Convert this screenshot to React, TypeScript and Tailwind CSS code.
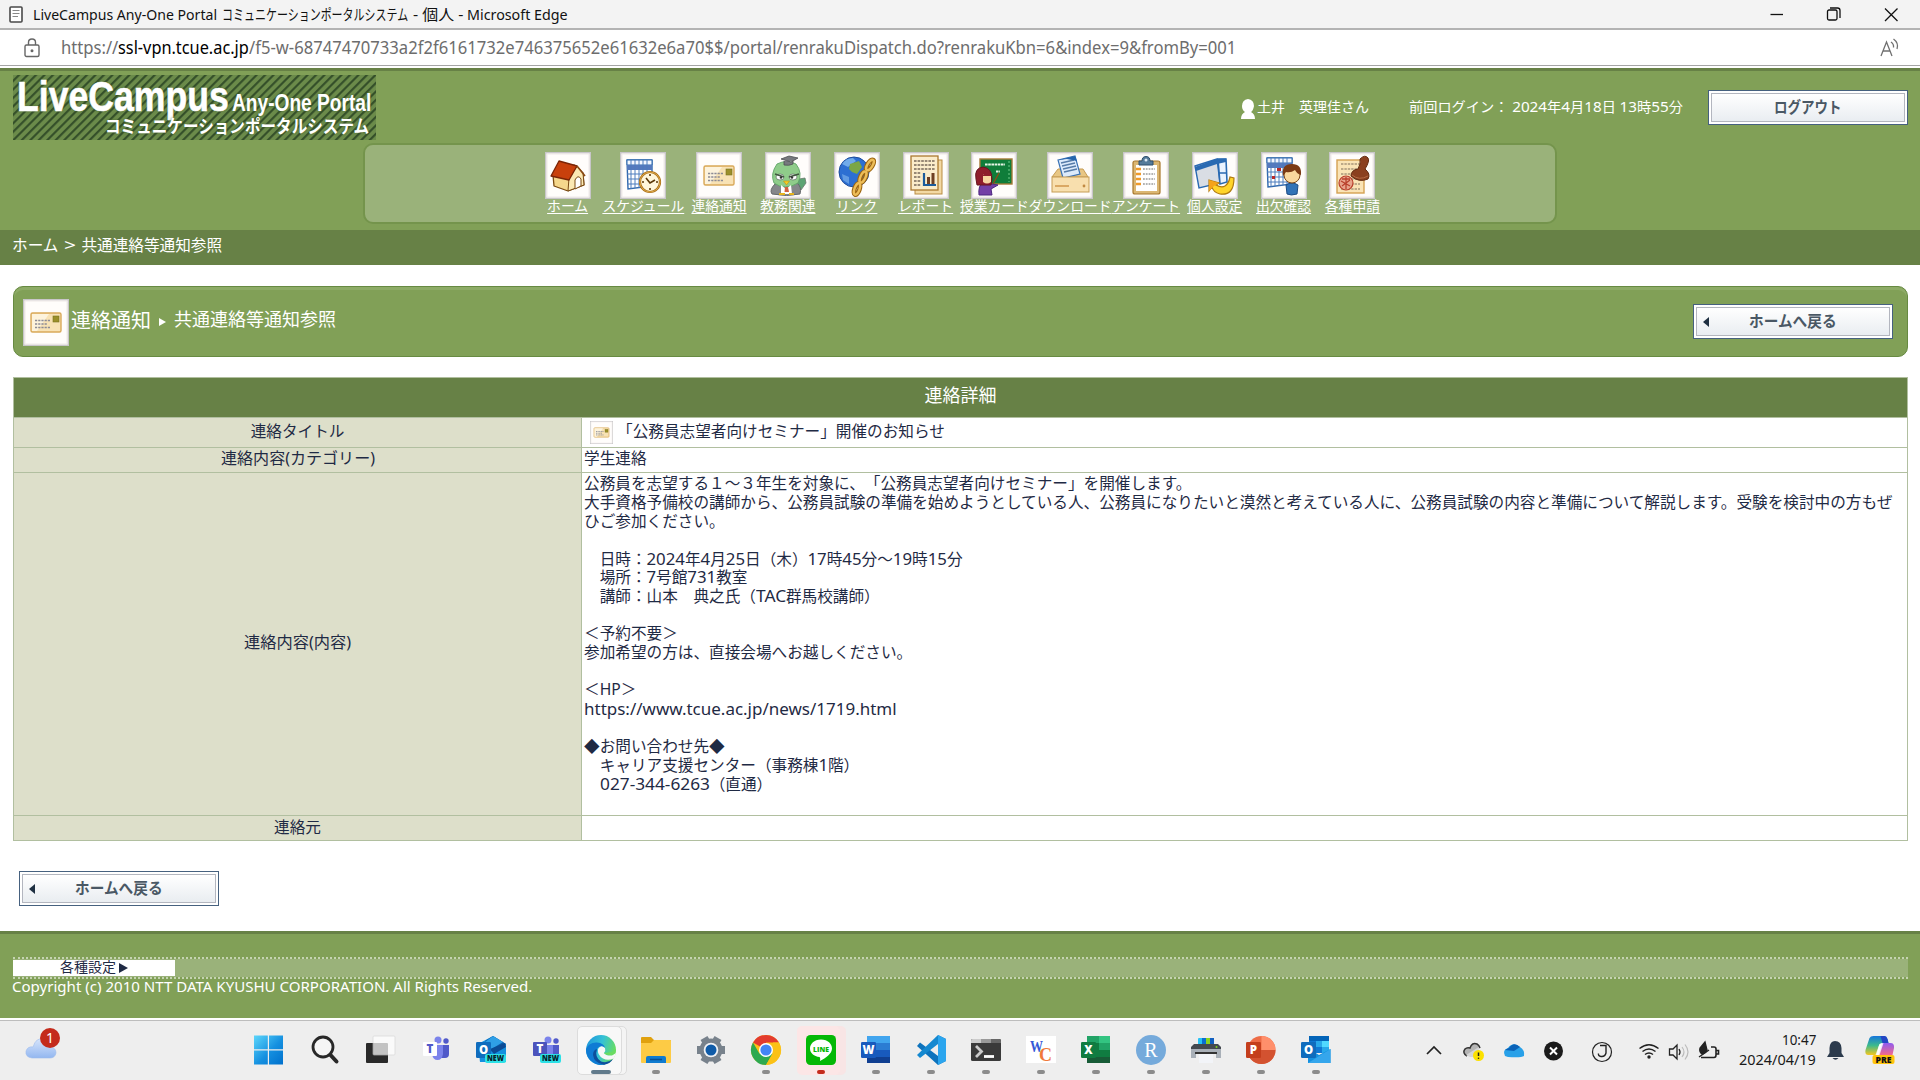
import React, { useLayoutEffect, useRef, useState } from "react";

/** Condenses or widens a single line of text to a given width. */
function Fit({ w, className = "", children }: { w: number; className?: string; children: React.ReactNode }) {
  const ref = useRef<HTMLSpanElement>(null);
  const [k, setK] = useState(1);
  useLayoutEffect(() => {
    if (ref.current && ref.current.offsetWidth) setK(w / ref.current.offsetWidth);
  }, [w]);
  return (
    <span className={"inline-block shrink-0 whitespace-pre " + className} style={{ width: w }}>
      <span ref={ref} className="inline-block origin-left whitespace-pre" style={{ transform: `scaleX(${k})` }}>
        {children}
      </span>
    </span>
  );
}

const D = ({ children }: { children: React.ReactNode }) => <span className="text-[1.075em] leading-none">{children}</span>;

/* ---------- portal icons (46 x 47) ---------- */

const HomeIcon = () => (
  <g strokeLinejoin="round">
    <path d="M8 23 L9 34 L23 39 L39 33 L38 21 L29 13 Z" fill="#f5d78c" stroke="#7a4a12" strokeWidth="1.3" />
    <path d="M24 26 L23 39 L39 33 L38 21 L32 14 Z" fill="#fbe9b4" stroke="#7a4a12" strokeWidth="1" />
    <path d="M6 24 L14 9 L32 14 L24 28 Z" fill="#c8400c" stroke="#7a2406" strokeWidth="1.3" />
    <path d="M32 14 L40 24" stroke="#8a4a12" strokeWidth="1.6" />
    <path d="M30 37 V28 Q33 22 36 27 V34 Z" fill="#fff" stroke="#7a4a12" strokeWidth="1" />
  </g>
);
const Grid = ({ x = 7, y = 8 }: { x?: number; y?: number }) => (
  <g transform={`translate(${x} ${y})`}>
    <path d="M0 0 H25 V26 L1 29 Z" fill="#fff" stroke="#2f68ad" strokeWidth="1.4" />
    <path d="M0 0 H25 V5 H0Z" fill="#f3f7ff" stroke="#2f68ad" strokeWidth="1" />
    <path d="M0 5 H25 V10 H0Z" fill="#5579bd" />
    <path d="M4 0 V29 M8 0 V28 M12 0 V28 M16 0 V27 M20 0 V27 M0 14 H25 M0 19 H25 M0 24 H25" stroke="#4c7dbd" strokeWidth="1" />
  </g>
);
const ScheduleIcon = () => (
  <g>
    <Grid />
    <circle cx="30" cy="30" r="10" fill="#fff6dc" stroke="#a86b12" strokeWidth="2.2" />
    <circle cx="30" cy="30" r="10" fill="none" stroke="#f0c060" strokeWidth="0.7" />
    <path d="M26 26 L30 31 L35 28 M30 22 V24 M30 36 V38 M22 30 H24 M36 30 H38" stroke="#5b3708" strokeWidth="1.6" fill="none" />
  </g>
);
const NoticeIcon = () => (
  <g>
    <rect x="8" y="14" width="30" height="19" rx="1.5" fill="#f8e2b4" stroke="#d9a95a" strokeWidth="1.4" />
    <path d="M9 15 H26 L14 32 H9Z" fill="#fdf3dc" />
    <path d="M12 21.5 H27 M12 25 H24 M12 28.5 H27" stroke="#8c8b95" strokeWidth="1.7" strokeDasharray="2.2 1" />
    <rect x="30" y="17" width="6" height="6" fill="#9a8f2a" stroke="#7b741f" strokeWidth="0.6" />
  </g>
);
const OwlIcon = () => (
  <g>
    <path d="M34 27 L40 26 L41 31 L36 38 L32 34Z" fill="#5da473" stroke="#6b7a6e" strokeWidth="0.8" />
    <path d="M10 32 Q4 38 7 42 Q22 45 35 42 Q37 35 32 31Z" fill="#85878a" stroke="#66696b" />
    <path d="M12 12 Q5 22 9 31 Q20 39 33 31 Q38 21 31 12 Q22 7 12 12Z" fill="#8fcc8a" stroke="#5fa566" strokeWidth="0.9" />
    <path d="M16 7 L24 4 L33 6 L26 10 Z M19 9 V13 Q24 14 28 12 V9" fill="#77797e" stroke="#4c4e52" strokeWidth="0.8" />
    <ellipse cx="15" cy="25" rx="4" ry="3" fill="#fff" stroke="#6a7a6c" strokeWidth="0.8" />
    <ellipse cx="28" cy="25" rx="4" ry="3" fill="#fff" stroke="#6a7a6c" strokeWidth="0.8" />
    <path d="M10 22 L19 25 M34 22 L24 25" stroke="#40583f" strokeWidth="1.4" />
    <circle cx="16" cy="25.5" r="1.2" fill="#333" />
    <circle cx="27" cy="25.5" r="1.2" fill="#333" />
    <path d="M16 33 L21 37 L26 33 L27 42 H16Z" fill="#fff" />
    <path d="M18.500 29 L24.500 29 L21.500 33Z" fill="#f4cd20" stroke="#c0901a" strokeWidth="0.6" />
    <path d="M20 35 H23 L24 40 H19.500Z" fill="#d0603f" />
    <path d="M14 42 H20 M24 42 H29" stroke="#e6b31e" strokeWidth="2" />
  </g>
);
const LinkIcon = () => (
  <g>
    <circle cx="20" cy="20" r="15" fill="#2d6fd2" stroke="#1f4c9b" />
    <path d="M8 12 Q12 6 19 6 L22 9 L14 15Z" fill="#8ec4f4" opacity=".7" />
    <path d="M16 12 L25 9 L28 15 L23 22 L18 20 L15 17Z" fill="#7ba646" />
    <path d="M8 22 L15 25 L15 32 L9 28Z" fill="#86b9ee" opacity=".6" />
    <g fill="none" stroke="#9c6410" strokeWidth="4.6">
      <ellipse cx="36" cy="13" rx="2.500" ry="6" transform="rotate(32 36 13)" />
      <ellipse cx="29" cy="25" rx="2.500" ry="6" transform="rotate(25 29 25)" />
      <ellipse cx="23" cy="37" rx="2.500" ry="6" transform="rotate(20 23 37)" />
    </g>
    <g fill="none" stroke="#edbd58" strokeWidth="2.400">
      <ellipse cx="36" cy="13" rx="2.500" ry="6" transform="rotate(32 36 13)" />
      <ellipse cx="29" cy="25" rx="2.500" ry="6" transform="rotate(25 29 25)" />
      <ellipse cx="23" cy="37" rx="2.500" ry="6" transform="rotate(20 23 37)" />
    </g>
  </g>
);
const ReportIcon = () => (
  <g>
    <rect x="12" y="8" width="27" height="34" fill="#f3d9a4" stroke="#b98b42" />
    <rect x="8" y="4" width="27" height="34" fill="#fbecca" stroke="#a9782f" strokeWidth="1.3" />
    <path d="M11 9 H32 M11 13 H32 M11 17 H32 M11 21 H18 M11 25 H18 M11 29 H18 M11 33 H18" stroke="#77675a" strokeWidth="1.700" strokeDasharray="2.6 1" />
    <path d="M21 21 V33 H33" stroke="#1c5c9c" strokeWidth="2.200" fill="none" />
    <path d="M25.500 32 V25 M30 32 V21" stroke="#6e3f22" strokeWidth="3" />
  </g>
);
const ClassIcon = () => (
  <g>
    <rect x="9" y="7" width="32" height="25" fill="#0f7d3a" stroke="#a67a38" strokeWidth="1.4" />
    <path d="M14 12.500 H34 M25 19.500 H29" stroke="#e6f5e6" strokeWidth="2.200" strokeDasharray="2.600 .6" />
    <path d="M38 9 V30" stroke="#6ecb88" strokeDasharray="2 2" />
    <path d="M22 32 L28 21" stroke="#8a4c17" strokeWidth="1.400" />
    <path d="M8 43 Q7 33 12 31 L21 32 L27 33 L20 37 L21 43Z" fill="#7440a6" stroke="#4c2680" />
    <path d="M5 27 Q3 16 12 15 Q21 16 21 27 L20 33 H6Z" fill="#8f1d2c" stroke="#661420" />
    <path d="M12 22 L20 23 L20 30 Q16 33 12 30Z" fill="#f8d4a0" />
    <path d="M9 24 Q14 23 15 17 L21 24" fill="#8f1d2c" />
  </g>
);
const DownloadIcon = () => (
  <g>
    <path d="M5 25 L11 17 H36 L41 25Z" fill="#e8c684" stroke="#c59c55" />
    <path d="M11 8 L28 4 L33 22 L16 26Z" fill="#dceafb" stroke="#3971b4" strokeWidth="1.2" />
    <path d="M14 11 L27 8 M15 14 L28 11 M16 17 L29 14 M17 20 L30 17" stroke="#567ba8" strokeWidth="1.400" />
    <path d="M11 8 L28 4 L30 9 L20 7Z" fill="#2665ad" />
    <rect x="5" y="25" width="37" height="15" fill="#f8dfae" stroke="#c59c55" />
    <path d="M8 34 H22" stroke="#d39a52" strokeWidth="1.600" />
    <circle cx="37" cy="34" r="1.4" fill="#c18a43" />
  </g>
);
const SurveyIcon = () => (
  <g>
    <rect x="10" y="9" width="27" height="33" rx="2" fill="#dbb672" stroke="#a8772c" strokeWidth="1.200" />
    <rect x="13" y="13" width="21" height="26" fill="#fff" />
    <path d="M13 17 H18 M13 22 H18 M13 27 H18 M13 32 H18" stroke="#f09a28" strokeWidth="2.500" />
    <path d="M20 17 H32 M20 22 H32 M20 27 H32 M20 32 H32" stroke="#9a9a9a" strokeWidth="1.300" strokeDasharray="1.8 1" />
    <path d="M16 13 V9 H19 Q19 4.500 23 4.500 Q27 4.500 27 9 H30 V13Z" fill="#547a9a" stroke="#2f4f6e" />
    <circle cx="23" cy="8" r="1.500" fill="#dce8f4" />
  </g>
);
const PersonalIcon = () => (
  <g>
    <path d="M3 14 L25 7 L28 31 L7 36Z" fill="#d9dde4" stroke="#2a6ab2" strokeWidth="1.400" />
    <path d="M26 7 L34 7 L35 30 L28 32Z" fill="#eaf3ff" stroke="#2a6ab2" strokeWidth="1.600" />
    <path d="M3 15 L24 7 L34 6.500 V10 L25 12 L4 19Z" fill="#2a6ab2" />
    <path d="M27 21 H35" stroke="#2a6ab2" strokeWidth="1.500" />
    <path d="M17 28 L27 31 L24 33 Q35 39 38 25 L42 26 Q42 44 28 42 Q21 40 20 35 L17 39Z" fill="#ffd42a" stroke="#b07a10" strokeWidth="1.200" />
    <path d="M17 28 L27 31 L22 34 L17 39Z" fill="#f5a31b" />
  </g>
);
const AttendIcon = () => (
  <g>
    <Grid x={6} y={6} />
    <path d="M11 24 H14 V27 H11Z M16 16 H20 V19 H16Z" fill="#b92828" />
    <path d="M25 33 Q31 29 37 33 L36 42 Q30 44 26 42Z" fill="#3273b7" stroke="#1d4c85" />
    <circle cx="31" cy="23" r="8" fill="#fad89e" stroke="#7a4516" />
    <path d="M22 24 Q20 12 31 12 Q41 12 40 23 Q36 22 34 18 Q30 21 25 20Z" fill="#7b3a14" />
  </g>
);
const ApplyIcon = () => (
  <g>
    <rect x="8" y="8" width="27" height="33" fill="#fae4b6" stroke="#d4a152" strokeWidth="1.400" />
    <path d="M12 12 H31 M12 17 H31 M12 22 H31 M12 27 H31 M12 32 H31 M12 37 H31" stroke="#a8957a" strokeWidth="1.600" strokeDasharray="2.400 1" />
    <path d="M31 7 Q36 2 39 6 Q41 9 36 17 Q42 22 39 27 Q30 31 22 24 Q22 18 29 17 Q32 12 31 7Z" fill="#8b401f" stroke="#622a10" />
    <path d="M23 23 Q30 29 39 24" stroke="#b56a43" strokeWidth="1" fill="none" />
    <circle cx="17" cy="31" r="7" fill="#e8a48c" stroke="#b93f2b" strokeWidth="1.200" />
    <path d="M12 29 L21 34 M17 25 V37 M13 34 L21 28 M13 27 H21" stroke="#b93f2b" strokeWidth="1.300" />
  </g>
);

const Tile = ({ icon, className = "w-[46px] h-[47px]" }: { icon: React.ReactNode; className?: string }) => (
  <svg viewBox="0 0 46 47" preserveAspectRatio="none" className={"block shrink-0 " + className}>
    <rect x="0.75" y="0.75" width="44.5" height="45.5" fill="#fffdfb" stroke="#c8c6c9" strokeWidth="1.5" />
    <rect x="2" y="2" width="42" height="43" fill="none" stroke="#efe9e8" />
    {icon}
  </svg>
);

const nav: [string, React.ReactNode, string][] = [
  ["ホーム", <HomeIcon />, "w-[68.85px]"],
  ["スケジュール", <ScheduleIcon />, "w-[82.6px]"],
  ["連絡通知", <NoticeIcon />, "w-[68.85px]"],
  ["教務関連", <OwlIcon />, "w-[68.85px]"],
  ["リンク", <LinkIcon />, "w-[68.85px]"],
  ["レポート", <ReportIcon />, "w-[68.85px]"],
  ["授業カード", <ClassIcon />, "w-[68.85px]"],
  ["ダウンロード", <DownloadIcon />, "w-[82.6px]"],
  ["アンケート", <SurveyIcon />, "w-[68.85px]"],
  ["個人設定", <PersonalIcon />, "w-[68.85px]"],
  ["出欠確認", <AttendIcon />, "w-[68.85px]"],
  ["各種申請", <ApplyIcon />, "w-[68.85px]"],
];

const PortalButton = ({ label, w, arrow }: { label: string; w: number; arrow?: boolean }) => (
  <button className="relative flex h-[35px] w-[200px] shrink-0 items-center justify-center border-[1.5px] border-[#46617f] bg-white p-[2px]">
    <span className="flex h-full w-full items-center justify-center border border-[#b3b6bf] bg-linear-to-b from-white to-[#e9edf1] text-[15.5px] font-bold leading-none text-[#4a5865]">
      <Fit w={w} className="mt-px">{label}</Fit>
    </span>
    {arrow && <span className="absolute left-[9px] top-[12px] h-0 w-0 border-y-[5px] border-r-[6px] border-y-transparent border-r-[#1f3042]" />}
  </button>
);

/* ---------- taskbar icons (30 x 30) ---------- */

const NewTag = () => (
  <g>
    <rect x="9" y="19" width="21" height="9" rx="2" fill="#2be0e6" />
    <text x="11" y="26.400" fontSize="8" fontWeight="900" fontFamily="Open Sans" fill="#06222a" textLength="17" lengthAdjust="spacingAndGlyphs">NEW</text>
  </g>
);
const TeamsShape = ({ solid }: { solid?: boolean }) => (
  <g>
    <circle cx="17" cy="5" r="3.500" fill="#7b83eb" />
    <circle cx="25" cy="6" r="2.700" fill="#5059c9" />
    <path d="M20 10 H28 V19 Q28 23 24 23 H20Z" fill="#5059c9" />
    <path d="M11 10 H22 V19 Q21 25 16.500 25 Q12 25 11 19Z" fill="#7b83eb" />
    <rect x="2" y="7" width="14" height="14" rx="1" fill={solid ? "#4b53bc" : "#fff"} />
    <text x="9" y="18" textAnchor="middle" fontSize="11.500" fontWeight="800" fontFamily="Open Sans" fill={solid ? "#fff" : "#5059c9"}>T</text>
  </g>
);
const Badge = ({ t, c, x = 0 }: { t: string; c: string; x?: number }) => (
  <g>
    <rect x={x} y="7" width="15" height="16" rx="1.300" fill={c} />
    <text x={x + 7.500} y="19" textAnchor="middle" fontSize="11.500" fontWeight="800" fontFamily="Open Sans" fill="#fff">{t}</text>
  </g>
);

const apps: { el: React.ReactNode; dot?: string; hl?: "edge" | "line" }[] = [
  {
    el: (
      <g fill="url(#win)">
        <path d="M-2 1 H11.800 V14.800 H-2Z M13 1 H27 V14.800 H13Z M-2 16 H11.800 V30 H-2Z M13 16 H27 V30 H13Z" transform="translate(0 -.5)" />
      </g>
    ),
  },
  { el: <g fill="none" stroke="#282828" strokeLinecap="round"><circle cx="12" cy="12" r="10" strokeWidth="2.800" fill="#f5f5f5" /><path d="M19.500 20 L25.500 26.500" strokeWidth="4" /></g> },
  { el: <g><rect x="0" y="8" width="22" height="20" rx="1" fill="#292929" /><rect x="7" y="1" width="22" height="19" rx="1" fill="#fff" opacity=".72" stroke="#d2d2d2" strokeWidth=".8" /></g> },
  { el: <TeamsShape /> },
  {
    el: (
      <g>
        <path d="M2 9 L17 1 L30 9 V27 H4Z" fill="#1490df" />
        <path d="M9 6 L17 1 L30 9 L18 18 L12 14Z" fill="#0a5cab" />
        <path d="M9 7 L17 1 L27 7 L14 15Z" fill="#2f9fe6" />
        <path d="M14 14 L29 8 L30 12 L18 19Z" fill="#0b4a94" />
        <Badge t="O" c="#0f6cbd" />
        <NewTag />
      </g>
    ),
  },
  { el: <g><TeamsShape solid /><NewTag /></g> },
  {
    hl: "edge",
    el: (
      <g>
        <circle cx="15" cy="15" r="15" fill="url(#edgeA)" />
        <path d="M0 14 Q3 7 11 7.500 Q18 8 19 13 Q14 9 11 14 Q8 22 15 27 Q19 29.500 22 28 Q17 31 12 29.700 Q0 26 0 14Z" fill="#0f7bd4" />
        <path d="M11 14 Q8 22 15 26.500 Q21 29 27 24 Q24 29 18 29.700 Q8 28 7 20 Q7 15 11 14Z" fill="#0d4f9c" />
        <path d="M12 14 Q15 9 19 13 Q20 16 18 18 Q20 21 26 20.500 L30 18 Q29.500 21 27.500 23.500 Q22 26 17 23.500 Q11 20 12 14Z" fill="#f7f7f7" />
        <path d="M18 18 Q20 20.500 26 20 Q30 18 30 14 L26 17Z" fill="#6bdc61" />
      </g>
    ),
  },
  {
    dot: "#8b8b8b",
    el: <g><path d="M0 3 Q0 2 1 2 H10 L13 5 H29 Q30 5 30 6 V12 H0Z" fill="#e0a10e" /><path d="M0 8 H10 L13 5 H29 Q30 5 30 6 V27 Q30 28 29 28 H1 Q0 28 0 27Z" fill="#fdcb45" /><path d="M5 28 V23 Q5 21 7 21 H23 Q25 21 25 23 V28Z" fill="#0f7bd0" /><path d="M9 24.500 H21" stroke="#0a4f91" strokeWidth="1.500" /></g>,
  },
  {
    el: (
      <g>
        <g fill="#78828c">
          <circle cx="15" cy="15" r="11.500" />
          <path d="M11 1 H19 V29 H11Z" transform="rotate(30 15 15)" />
          <path d="M11 1 H19 V29 H11Z" transform="rotate(90 15 15)" />
          <path d="M11 1 H19 V29 H11Z" transform="rotate(150 15 15)" />
        </g>
        <circle cx="15" cy="15" r="7.300" fill="#f0f2f5" />
        <circle cx="15" cy="15" r="5.500" fill="#0f5ba8" />
      </g>
    ),
  },
  {
    dot: "#8b8b8b",
    el: (
      <g>
        <circle cx="15" cy="15" r="15" fill="#fbc116" />
        <path d="M15 15 L2 7.500 A15 15 0 0 1 28 7.500 H15Z" fill="#e33b2e" />
        <path d="M2 7.500 A15 15 0 0 0 15 30 L21.500 18.700 L15 15 L8.500 18.700Z" fill="#2da94f" />
        <path d="M28 7.500 A15 15 0 0 1 15 30 L21.500 18.700 L22 7.500Z" fill="#fbc116" />
        <circle cx="15" cy="15" r="7" fill="#fff" />
        <circle cx="15" cy="15" r="5.600" fill="#4285f4" />
      </g>
    ),
  },
  {
    hl: "line",
    dot: "#c42b1c",
    el: (
      <g>
        <rect width="30" height="30" rx="4.500" fill="#06b806" />
        <path d="M15 4.500 C8 4.500 4 9 4 13.500 C4 18 8 21.500 13.500 22 Q14.500 22.500 14 26 C20 23 26 18.500 26 13.500 C26 9 22 4.500 15 4.500Z" fill="#fff" />
        <text x="7" y="16.600" fontSize="7.500" fontWeight="900" fontFamily="Open Sans" fill="#06b806" textLength="16" lengthAdjust="spacingAndGlyphs">LINE</text>
      </g>
    ),
  },
  {
    dot: "#8b8b8b",
    el: <g><path d="M6 1 H29 V8 H6Z" fill="#41a5ee" /><path d="M6 8 H29 V15 H6Z" fill="#2b7cd3" /><path d="M6 15 H29 V22 H6Z" fill="#185abd" /><path d="M6 22 H29 V28 H6Z" fill="#103f91" /><Badge t="W" c="#185abd" /></g>,
  },
  {
    dot: "#8b8b8b",
    el: <g><path d="M22 0 L30 4 V26 L22 30 L1 11 L4 7.500 L22 21Z" fill="#0d73bd" /><path d="M22 0 L30 4 V26 L22 30Z" fill="#2ba5ee" /><path d="M1 20 L22 0 V9 L4 23Z" fill="#1488d0" /></g>,
  },
  {
    dot: "#8b8b8b",
    el: <g><rect y="4" width="30" height="22" rx="1.500" fill="#3a3a3a" /><path d="M0 8 V5.500 Q0 4 1.500 4 H10 V8Z" fill="#ccc" /><path d="M10 4 H20 V8 H10Z" fill="#999" /><path d="M20 4 H28.500 Q30 4 30 5.500 V8 H20Z" fill="#666" /><path d="M5 11 L10.500 16.500 L5 22" fill="none" stroke="#ccc" strokeWidth="2.800" /><path d="M13 21.500 H23" stroke="#fff" strokeWidth="2.800" /></g>,
  },
  {
    dot: "#8b8b8b",
    el: <g><rect y="1" width="30" height="27" fill="#fff" /><text x="4" y="17" fontSize="16" fontWeight="700" fontFamily="Liberation Serif" fill="#3558d6" textLength="13" lengthAdjust="spacingAndGlyphs">W</text><text x="13" y="26" fontSize="18" fontWeight="700" fontFamily="Liberation Serif" fill="#f07a3c" textLength="13" lengthAdjust="spacingAndGlyphs">C</text></g>,
  },
  {
    dot: "#8b8b8b",
    el: <g><path d="M6 1 H18 V8 H6Z" fill="#21a366" /><path d="M18 1 H29 V8 H18Z" fill="#33c481" /><path d="M6 8 H18 V15 H6Z" fill="#107c41" /><path d="M18 8 H29 V15 H18Z" fill="#21a366" /><path d="M6 15 H29 V22 H6Z" fill="#107c41" /><path d="M6 22 H29 V28 H6Z" fill="#185c37" /><Badge t="X" c="#107c41" /></g>,
  },
  { dot: "#8b8b8b", el: <g><circle cx="15" cy="15" r="15" fill="#75aadb" /><text x="15" y="21.500" textAnchor="middle" fontSize="20" fontFamily="Liberation Serif" fill="#fff">R</text></g> },
  {
    dot: "#8b8b8b",
    el: <g><rect x="7" y="3" width="16" height="9" rx="1" fill="#28c2f5" /><path d="M11 3 H15 V12 H11Z" fill="#0a6fd0" /><path d="M15 3 H19 V12 H15Z" fill="#8bd420" /><path d="M19 3 H23 V12 H19Z" fill="#1360c0" /><path d="M0 12 L3 9 H27 L30 12 V15 H0Z" fill="#44494f" /><path d="M0 14 H30 V23 H25 V18 H5 V23 H0Z" fill="#a9b0b8" /><path d="M4 18 H26" stroke="#333" strokeWidth="2" /><path d="M8 19 H22 V28 H8Z" fill="#f2f4f8" /><circle cx="25.500" cy="12" r="1" fill="#7fd41e" /></g>,
  },
  {
    dot: "#8b8b8b",
    el: <g><circle cx="15.500" cy="15" r="14" fill="#ed6c47" /><path d="M15.500 1 A14 14 0 0 1 29.500 15 H15.500Z" fill="#ff8f6b" /><path d="M1.500 15 A14 14 0 0 0 29.500 15Z" fill="#d35230" /><Badge t="P" c="#c43e1c" /></g>,
  },
  {
    dot: "#8b8b8b",
    el: <g><rect x="8" y="1" width="20" height="17" fill="#0364b8" /><path d="M8 6 H15 V12 H8Z M15 12 H21 V18 H15Z" fill="#0f78d4" /><path d="M15 6 H21 V12 H15Z M21 12 H28 V18 H21Z" fill="#28a8ea" /><path d="M21 6 H28 V12 H21Z" fill="#50d9ff" /><path d="M7 28 V13 L18 20 L29.500 14 V28Z" fill="#1490df" /><path d="M7 28 L29.500 14 V28Z" fill="#35a6ec" /><Badge t="O" c="#0f6cbd" /></g>,
  },
];

function TaskApp({ app }: { app: (typeof apps)[number] }) {
  return (
    <div className="relative flex h-[59px] w-[55px] shrink-0 justify-center">
      {app.hl === "edge" && (
        <>
          <div className="absolute left-[20px] top-[5px] h-[49px] w-[33px] rounded-[5px] border border-[#dcdcdc] bg-[#f4f4f4]" />
          <div className="absolute left-[3px] top-[5px] h-[49px] w-[45px] rounded-[5px] border border-[#dcdcdc] bg-[#f8f8f8]" />
        </>
      )}
      {app.hl === "line" && (
        <>
          <div className="absolute left-[20px] top-[5px] h-[49px] w-[32px] rounded-[5px] bg-[#f8e5e5]" />
          <div className="absolute left-[3px] top-[5px] h-[49px] w-[43px] rounded-[5px] bg-[#fce6e6]" />
        </>
      )}
      <svg viewBox="0 0 30 30" className="relative mt-[14px] h-[30px] w-[30px] overflow-visible">{app.el}</svg>
      {app.hl === "edge" && <div className="absolute left-[17.500px] top-[49px] h-[4px] w-[20px] rounded-full bg-[#617a8b]" />}
      {app.dot && (
        <div className="absolute left-[23.500px] top-[49px] h-[4px] w-[8px] rounded-full" style={{ backgroundColor: app.dot }} />
      )}
    </div>
  );
}

function Taskbar() {
  return (
    <footer className="relative flex h-[60px] w-full shrink-0 border-t border-[#bdbdbd] bg-[#eeeeee]">
      <svg className="absolute h-0 w-0">
        <defs>
          <linearGradient id="win" x1="0" y1="0" x2="1" y2="1"><stop offset="0" stopColor="#5cd6fb" /><stop offset=".55" stopColor="#1590e0" /><stop offset="1" stopColor="#0070cc" /></linearGradient>
          <linearGradient id="edgeA" x1="0" y1="0.2" x2="1" y2=".5"><stop offset="0" stopColor="#1f97dc" /><stop offset=".5" stopColor="#35c1d6" /><stop offset="1" stopColor="#6bdf5a" /></linearGradient>
          <linearGradient id="cloud" x1="0" y1="0" x2="0" y2="1"><stop offset="0" stopColor="#d7e5fb" /><stop offset="1" stopColor="#93b7f0" /></linearGradient>
          <linearGradient id="cop1" x1="0" y1="0" x2="0" y2="1"><stop offset="0" stopColor="#1576dc" /><stop offset=".5" stopColor="#3cba8c" /><stop offset="1" stopColor="#f5c71f" /></linearGradient>
          <linearGradient id="cop2" x1="0" y1="0" x2="0" y2="1"><stop offset="0" stopColor="#8f5bf0" /><stop offset="1" stopColor="#f36a8c" /></linearGradient>
        </defs>
      </svg>
      <div className="w-[243.500px] shrink-0 pl-[24px] pt-[5px]">
        <svg viewBox="0 0 38 36" className="h-[36px] w-[38px]">
          <path d="M8 32 Q1 31 2 25 Q4 20 9 21 Q12 11 20 13 Q26 14 27 21 Q32 22 32 27 Q31 32 26 32Z" fill="url(#cloud)" stroke="#9dbcec" strokeWidth=".6" />
          <circle cx="26" cy="12" r="10" fill="#c42b1c" />
          <text x="26" y="17" textAnchor="middle" fontSize="14" fontFamily="Noto Sans" fill="#fff">1</text>
        </svg>
      </div>
      {apps.map((a, i) => <TaskApp key={i} app={a} />)}
      <svg viewBox="0 0 390 59" className="ml-[74.500px] h-[59px] w-[390px] shrink-0 self-start" fill="none">
        <path d="M9 33 L16 26 L23 33" stroke="#222" strokeWidth="1.700" />
        <path d="M49 35 Q44 32 47 28 Q49 26 52 27 Q54 21 59 23 Q61 24 62 27" fill="#b4b4b4" stroke="#333" strokeWidth="1.500" />
        <path d="M48 34 L61 26 L60 36 H52Z" fill="#d6d6d6" />
        <circle cx="60.500" cy="34.500" r="5.500" fill="#fce100" />
        <path d="M60.500 31.500 V35" stroke="#222" strokeWidth="1.500" /><circle cx="60.500" cy="37.300" r=".8" fill="#222" />
        <path d="M87 35 Q84 29 90 27 Q95 20 102 26 Q107 29 106 35 Q103 37 90 36Z" fill="#28a0e8" />
        <path d="M87 29 Q90 27 91 27 Q96 20 102 26 L96 30Z" fill="#0a62b8" />
        <circle cx="135.500" cy="30" r="9.500" fill="#1b1b1b" /><path d="M132 26.500 L139 33.500 M139 26.500 L132 33.500" stroke="#fff" strokeWidth="2" />
        <circle cx="184" cy="31" r="9.500" stroke="#222" strokeWidth="1.200" />
        <path d="M182 24.500 H188 V32 Q187 36 183 35.500 Q180 35 180.500 32.500" stroke="#222" strokeWidth="1.400" />
        <g stroke="#222" strokeWidth="1.500"><path d="M221.500 27.500 Q231 20 240.500 27.500" /><path d="M224.500 30.500 Q231 25.500 237.500 30.500" /><path d="M227 33.500 Q231 30.500 235 33.500" /></g>
        <circle cx="231" cy="36" r="1.700" fill="#222" />
        <path d="M251.500 28 H255 L259 24 V38 L255 34 H251.500Z" stroke="#222" strokeWidth="1.300" />
        <path d="M261 28 Q263 31 261 34" stroke="#222" strokeWidth="1.300" /><path d="M264 26 Q268 31 264 36 M267 23.500 Q273 31 267 38.500" stroke="#bbb" strokeWidth="1.200" />
        <path d="M283 36.500 H296 Q298 36.500 298 34 V28 Q298 26 296 26 H293 M298 29.500 H300.500 V33 H298" stroke="#222" strokeWidth="1.600" />
        <path d="M287 21 L289 29 Q288 32 284 33 Q281 31 282 27Z" fill="#222" stroke="#222" strokeWidth="1.300" />
        <path d="M281 36 L291 29" stroke="#222" strokeWidth="1.400" />
      </svg>
    </footer>
  );
}

const rows: React.ReactNode[] = [
  "公務員を志望する１～３年生を対象に、「公務員志望者向けセミナー」を開催します。",
  "大手資格予備校の講師から、公務員試験の準備を始めようとしている人、公務員になりたいと漠然と考えている人に、公務員試験の内容と準備について解説します。受験を検討中の方もぜ",
  "ひご参加ください。",
  "",
  <>　日時：<D>2024</D>年<D>4</D>月<D>25</D>日（木）<D>17</D>時<D>45</D>分～<D>19</D>時<D>15</D>分</>,
  <>　場所：<D>7</D>号館<D>731</D>教室</>,
  <>　講師：山本　典之氏（<Fit w={30}>TAC</Fit>群馬校講師）</>,
  "",
  "＜予約不要＞",
  "参加希望の方は、直接会場へお越しください。",
  "",
  <>＜<Fit w={21}>HP</Fit>＞</>,
  <Fit w={312.5}><D>https://www.tcue.ac.jp/news/1719.html</D></Fit>,
  "",
  "◆お問い合わせ先◆",
  <>　キャリア支援センター（事務棟<D>1</D>階）</>,
  <>　<Fit w={110}><D>027-344-6263</D></Fit>（直通）</>,
  "",
];

const Label = ({ children }: { children: React.ReactNode }) => (
  <div className="flex w-[568px] shrink-0 items-center justify-center border-r border-[#b1bfa0] bg-[#dddfca]">{children}</div>
);

export default function App() {
  return (
    <div className="flex h-[1080px] w-[1920px] flex-col overflow-hidden bg-white font-['Noto_Sans','Noto_Sans_CJK_JP',sans-serif] text-[15.63px] text-[#1f2a44] [text-spacing-trim:space-all]">
      {/* window title */}
      <div className="flex h-[30px] shrink-0 items-center border-b-2 border-[#b3b3b3] bg-[#f3f3f3] text-[15px] text-[#111]">
        <svg viewBox="0 0 14 17" className="ml-[9px] h-[17px] w-[14px]" fill="none" stroke="#4a4a4a">
          <rect x="1" y="1" width="12" height="15" rx="1" strokeWidth="1.600" fill="#fff" />
          <path d="M3.500 4.500 H10.500 M3.500 7.500 H10.500 M3.500 10.500 H9" stroke="#888" />
        </svg>
        <Fit w={184} className="ml-[10px]">LiveCampus Any-One Portal</Fit>
        <Fit w={186} className="ml-[5px]">コミュニケーションポータルシステム</Fit>
        <Fit w={50} className="ml-[5px]">- 個人 -</Fit>
        <Fit w={101} className="ml-[4px]">Microsoft Edge</Fit>
        <svg viewBox="0 0 140 20" className="ml-auto mr-[15px] h-[20px] w-[140px]" fill="none" stroke="#111" strokeWidth="1.300">
          <path d="M5.500 10.500 H18" />
          <rect x="62.500" y="6" width="9.500" height="10" rx="1.500" />
          <path d="M65 4 H72.500 Q75 4 75 6.500 V14" />
          <path d="M120 4.500 L132.500 17 M132.500 4.500 L120 17" />
        </svg>
      </div>
      {/* address bar */}
      <div className="flex h-[36px] shrink-0 items-center border-b border-[#a5a5a5] bg-white text-[17.5px] text-[#6d6d6d]">
        <svg viewBox="0 0 16 20" className="ml-[24px] h-[20px] w-[16px]" fill="none" stroke="#666" strokeWidth="1.400">
          <rect x="1" y="7" width="14" height="11.500" rx="1.500" />
          <path d="M4.500 7 V4.500 Q4.500 1 8 1 Q11.500 1 11.500 4.500 V7" />
          <circle cx="8" cy="12.800" r=".8" fill="#666" />
        </svg>
        <Fit w={57} className="ml-[21px]">https://</Fit>
        <Fit w={130.5} className="text-black">ssl-vpn.tcue.ac.jp</Fit>
        <Fit w={987.5}>/f5-w-68747470733a2f2f6161732e746375652e61632e6a70$$/portal/renrakuDispatch.do?renrakuKbn=6&index=9&fromBy=001</Fit>
        <svg viewBox="0 0 20 20" className="ml-auto mr-[20px] h-[20px] w-[20px]" fill="none" stroke="#707070" strokeWidth="1.300">
          <path d="M1 18 L6.500 4 L12 18 M3 13 H10" />
          <path d="M11 4 Q14 6 13.500 9.500 M13.500 1 Q19 5 17 11" />
        </svg>
      </div>
      <div className="mt-[2px] h-[3px] shrink-0 bg-[#678146]" />

      {/* portal header */}
      <header className="flex h-[159px] shrink-0 flex-col bg-[#81a057] text-white">
        <div className="flex h-[72px] items-start">
          <div className="ml-[13px] mt-[4px] h-[65px] w-[363px] shrink-0 bg-[repeating-linear-gradient(135deg,#6b8b4a_0px,#6b8b4a_2.7px,#35502a_3.7px,#35502a_4.700px,#6b8b4a_6px)] font-['Liberation_Sans','Noto_Sans_CJK_JP',sans-serif] font-bold [text-shadow:0_0_3px_#47632f]">
            <div className="flex h-[40px] items-baseline pl-[4px] leading-[42px]">
              <Fit w={212} className="text-[43px] [-webkit-text-stroke:0.6px_white]">LiveCampus</Fit>
              <Fit w={139} className="ml-[3px] text-[24.5px]">Any-One Portal</Fit>
            </div>
            <div className="pl-[92px] text-[18px] leading-[25px]"><Fit w={264}>コミュニケーションポータルシステム</Fit></div>
          </div>
          <div className="ml-auto mr-[12px] mt-[19px] flex h-[35px] items-center text-[14px]">
            <svg viewBox="0 0 14 20" className="mt-[2px] h-[20px] w-[14px]" fill="#fff"><path d="M7 0 Q13 1 13 7 Q12 12 10 13 Q14 15 14 20 H0 Q0 15 4 13 Q1 11 1 7 Q1 1 7 0Z" /></svg>
            <Fit w={112} className="-mt-[3px] ml-[2px]">土井　英理佳さん</Fit>
            <Fit w={274} className="-mt-[3px] ml-[40px]">前回ログイン： <D>2024</D>年<D>4</D>月<D>18</D>日 <D>13</D>時<D>55</D>分</Fit>
            <div className="ml-[25px]"><PortalButton label="ログアウト" w={68} /></div>
          </div>
        </div>
        <nav className="mx-auto flex h-[81px] w-[1194px] justify-center rounded-[10px] border-2 border-[#74944c] bg-[#9ab27a] pt-[7px]">
          {nav.map(([label, icon, w]) => (
            <a key={label} className={"flex shrink-0 flex-col items-center " + w}>
              <Tile icon={icon} />
              <span className="whitespace-nowrap text-[13.800px] leading-[13px] underline underline-offset-[2px]">{label}</span>
            </a>
          ))}
        </nav>
      </header>
      <div className="flex h-[35px] shrink-0 items-center bg-[#678146] pb-[4px] pl-[12px] text-white">
        ホーム<Fit w={12} className="ml-[6px] mr-[5px]">&gt;</Fit>共通連絡等通知参照
      </div>

      {/* page heading */}
      <div className="ml-[13px] mr-[12px] mt-[21px] flex h-[71px] shrink-0 items-center rounded-[10px] border border-[#678a42] bg-[#81a057] pl-[9px] text-white shadow-[inset_0_3px_0_#8dab66]">
        <Tile icon={<NoticeIcon />} className="mt-px h-[47px] w-[46px]" />
        <span className="ml-[2px] pb-[2px] text-[20px] leading-none">連絡通知</span>
        <span className="ml-[8px] mt-px h-0 w-0 border-y-[4.500px] border-l-[7px] border-y-transparent border-l-white" />
        <span className="ml-[8px] pb-[5px] text-[18px] leading-none">共通連絡等通知参照</span>
        <div className="ml-auto mr-[14px]"><PortalButton label="ホームへ戻る" w={88} arrow /></div>
      </div>

      {/* detail table */}
      <section className="ml-[13px] mr-[12px] mt-[20px] flex h-[464px] shrink-0 flex-col border border-[#b1bfa0]">
        <div className="flex h-[40px] shrink-0 items-center justify-center border-b border-[#b1bfa0] bg-[#678146] pb-[4px] text-[18px] text-white">連絡詳細</div>
        <div className="flex h-[30px] shrink-0 border-b border-[#b1bfa0]">
          <Label><span className="pb-[1px]">連絡タイトル</span></Label>
          <div className="flex items-center pl-[8px]">
            <Tile icon={<NoticeIcon />} className="h-[23px] w-[23px]" />
            <span className="ml-[4px] pb-[1px]">「公務員志望者向けセミナー」開催のお知らせ</span>
          </div>
        </div>
        <div className="flex h-[25px] shrink-0 border-b border-[#b1bfa0]">
          <Label><Fit w={154} className="-mt-[2px]">連絡内容(カテゴリー)</Fit></Label>
          <div className="flex items-center pb-[2px] pl-[2px]">学生連絡</div>
        </div>
        <div className="flex h-[343px] shrink-0 border-b border-[#b1bfa0]">
          <Label><Fit w={107} className="-mt-[2px]">連絡内容(内容)</Fit></Label>
          <div className="pl-[2px] pt-[1.5px]">
            {rows.map((r, i) => (
              <div key={i} className="flex h-[18.770px] items-center whitespace-pre leading-none"><span>{r}</span></div>
            ))}
          </div>
        </div>
        <div className="flex min-h-0 flex-1">
          <Label><span className="pb-[1px]">連絡元</span></Label>
        </div>
      </section>
      <div className="ml-[19px] mt-[30px] shrink-0"><PortalButton label="ホームへ戻る" w={88} arrow /></div>

      {/* portal footer */}
      <div className="mt-[25px] flex h-[87px] shrink-0 flex-col border-t-[3px] border-[#678146] bg-[#81a057] pl-[13px] pr-[12px] pt-[23px] text-white">
        <div className="flex h-[22px] shrink-0 items-stretch border-y-2 border-dotted border-[#c5d3b2] bg-[#9ab27a] bg-clip-padding py-px">
          <div className="flex w-[162px] items-center justify-center bg-white text-[14px] leading-none text-[#1f2a44]">
            <span className="-mt-[3px] mr-[3px]">各種設定</span>
            <span className="h-0 w-0 border-y-[5px] border-l-[9px] border-y-transparent border-l-[#1f2a44]" />
          </div>
        </div>
        <div className="-ml-px text-[14.200px] leading-[16px]"><Fit w={520}>Copyright (c) 2010 NTT DATA KYUSHU CORPORATION. All Rights Reserved.</Fit></div>
      </div>
      <div className="h-[2px] shrink-0" />
      <div className="relative">
        <Taskbar />
        <div className="absolute right-[104px] top-[9px] flex flex-col items-end text-[15px] leading-[20px] text-[#1a1a1a]">
          <Fit w={34}>10:47</Fit>
          <Fit w={77}>2024/04/19</Fit>
        </div>
        <svg viewBox="0 0 70 34" className="absolute right-[24px] top-[14px] h-[34px] w-[70px]">
          <path d="M1 23 L3.500 19 V14 Q4 7 9 7 Q15 7 15.500 14 V19 L18 23Z M6.500 24 H12.500 Q9.500 27.500 6.500 24Z" fill="#2c3b4d" />
          <g transform="translate(39.500 1)">
            <path d="M4 3 Q5 1 8 1 H19 Q21 1 22 4 L23 8 H17 Q14 8 13 12 L11 20 H3 Q-1 20 0 15Z" fill="url(#cop1)" />
            <path d="M15 1 H19 Q21 1 22 4 L23 8 H17Z" fill="#2446c4" />
            <path d="M17 8 H25 Q29 8 28.500 13 L27 20 H13 L16 10Z" fill="url(#cop2)" />
            <path d="M14 9 L18 8 L14 20 H10Z" fill="#fff" opacity=".85" />
            <rect x="7" y="20" width="22" height="9" rx="2" fill="#ffc40c" />
            <text x="10" y="27.500" fontSize="8.500" fontWeight="900" fontFamily="Open Sans" fill="#111" textLength="16" lengthAdjust="spacingAndGlyphs">PRE</text>
          </g>
        </svg>
      </div>
    </div>
  );
}
